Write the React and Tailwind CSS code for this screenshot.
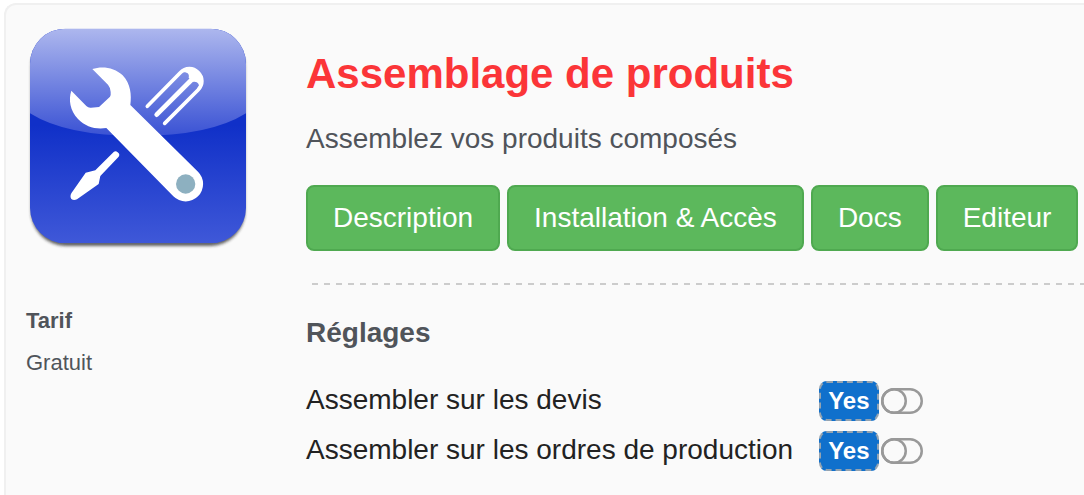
import { useState } from "react";

const links = [
  { label: "Description", href: "#description" },
  { label: "Installation & Accès", href: "#installation" },
  { label: "Docs", href: "#docs" },
  { label: "Editeur", href: "#editeur" },
];

const settings = [
  { id: "quotes", label: "Assembler sur les devis" },
  { id: "orders", label: "Assembler sur les ordres de production" },
];

function ToolsIcon() {
  return (
    <svg className="w-56 h-56" viewBox="78 75 672 672" role="img" aria-label="Assemblage de produits">
      <defs>
        <linearGradient id="base" x1="0" y1="0" x2="0" y2="1">
          <stop offset="0.45" stopColor="#1030c8" />
          <stop offset="1" stopColor="#3f58d8" />
        </linearGradient>
        <linearGradient id="gloss" x1="0" y1="0" x2="0" y2="1">
          <stop offset="0" stopColor="#adb7ee" />
          <stop offset="1" stopColor="#3a52d4" />
        </linearGradient>
        <clipPath id="tile">
          <rect x="90" y="86" width="648" height="644" rx="106" />
        </clipPath>
        <filter id="shadow" x="-10%" y="-10%" width="120%" height="120%">
          <feGaussianBlur stdDeviation="5" />
        </filter>
      </defs>
      <rect x="93" y="98" width="642" height="640" rx="104" fill="#222" opacity="0.7" filter="url(#shadow)" />
      <g clipPath="url(#tile)">
        <rect x="90" y="86" width="648" height="644" fill="url(#base)" />
        <path d="M90 86H738V340Q630 408 414 408Q198 408 90 340Z" fill="url(#gloss)" />
      </g>
      {/* screwdriver handle */}
      <g fill="none" stroke="#fff" strokeLinecap="round">
        <path d="M442 319L540 219C558 200 580 203 594 217C609 232 610 253 594 270L494 370" strokeWidth="11" />
        <path d="M470 344L574 240" strokeWidth="14" />
      </g>
      <path d="M540 219C558 200 580 200 596 215C612 231 611 252 597 268C600 253 592 243 579 246L566 233C570 220 558 213 540 219Z" fill="#fff" />
      {/* screwdriver blade */}
      <path d="M341 456Q347 451 353 457Q361 463 356 470L301 528L296 552L231 598Q221 602 214 597Q209 590 214 580L257 518L286 511Z" fill="#fff" />
      {/* wrench */}
      <path d="M277 207C306 197 344 202 368 226C392 252 395 284 391 315L594 515A52 52 0 0 1 520 589L319 384C288 389 257 381 234 357C210 331 205 299 214 272L259 318Q265 324 273 323L297 321L330 290Q333 285 332 276Q331 262 324 254Z" fill="#fff" />
      <circle cx="557" cy="552" r="29" fill="#8db0c0" />
    </svg>
  );
}

function Toggle({ id, label }) {
  const [on, setOn] = useState(false);

  return (
    <div className="contents">
      <label htmlFor={id} className="text-[28px] leading-[38px] text-[#222]">
        {label}
      </label>
      <label htmlFor={id} className="flex items-center gap-0.5 cursor-pointer">
        <span className="rounded-lg border-2 border-dashed border-[#95a3b0] bg-[#1070cc] px-[7px] text-2xl leading-9 font-bold text-white">
          Yes
        </span>
        <input
          id={id}
          type="checkbox"
          role="switch"
          className="sr-only"
          checked={on}
          onChange={(e) => setOn(e.target.checked)}
        />
        <svg className="w-[42px] h-[26px]" viewBox="0 0 42 26" fill="none" stroke="#999" strokeWidth="2.5" aria-hidden="true">
          <rect x="1.25" y="1.25" width="39.5" height="23.5" rx="11.75" />
          <circle cx={on ? 29 : 13} cy="13" r="11.75" />
        </svg>
      </label>
    </div>
  );
}

export default function App() {
  return (
    <div className="min-h-screen flex bg-white pl-1 pt-[3px] font-['Liberation_Sans',Arial,sans-serif] text-[#50545a]">
      <div className="flex-1 flex min-w-0 overflow-hidden rounded-tl-xl border-l-2 border-t-2 border-[#f0f0f0] bg-[#fafafa] pl-5 pt-5">
        <aside className="w-[280px] shrink-0">
          <ToolsIcon />
          <h3 className="mt-14 text-[22px] leading-8 font-bold">Tarif</h3>
          <p className="mt-[10px] text-[22px] leading-8">Gratuit</p>
        </aside>

        <main className="flex-1 min-w-0">
          <h1 className="mt-6 text-[42px] leading-[50px] font-bold text-[#fb3538]">Assemblage de produits</h1>
          <p className="mt-5 text-[28px] leading-10">Assemblez vos produits composés</p>

          <nav className="mt-[26px] flex gap-[7px]">
            {links.map((l) => (
              <a
                key={l.label}
                href={l.href}
                className="whitespace-nowrap rounded-lg border-2 border-[#4fa950] bg-[#5cb85c] px-[25px] py-3 text-[28px] leading-[38px] text-white hover:bg-[#449d44]"
              >
                {l.label}
              </a>
            ))}
          </nav>

          <div className="mt-8 h-0.5 bg-[repeating-linear-gradient(90deg,transparent_0_6px,#ccc_6px_12px)]" />

          <h2 className="mt-7 text-[28px] leading-10 font-bold">Réglages</h2>
          <div className="mt-7 grid grid-cols-[max-content_max-content] gap-x-[26px] gap-y-[10px]">
            {settings.map((s) => (
              <Toggle key={s.id} id={s.id} label={s.label} />
            ))}
          </div>
        </main>
      </div>
    </div>
  );
}
